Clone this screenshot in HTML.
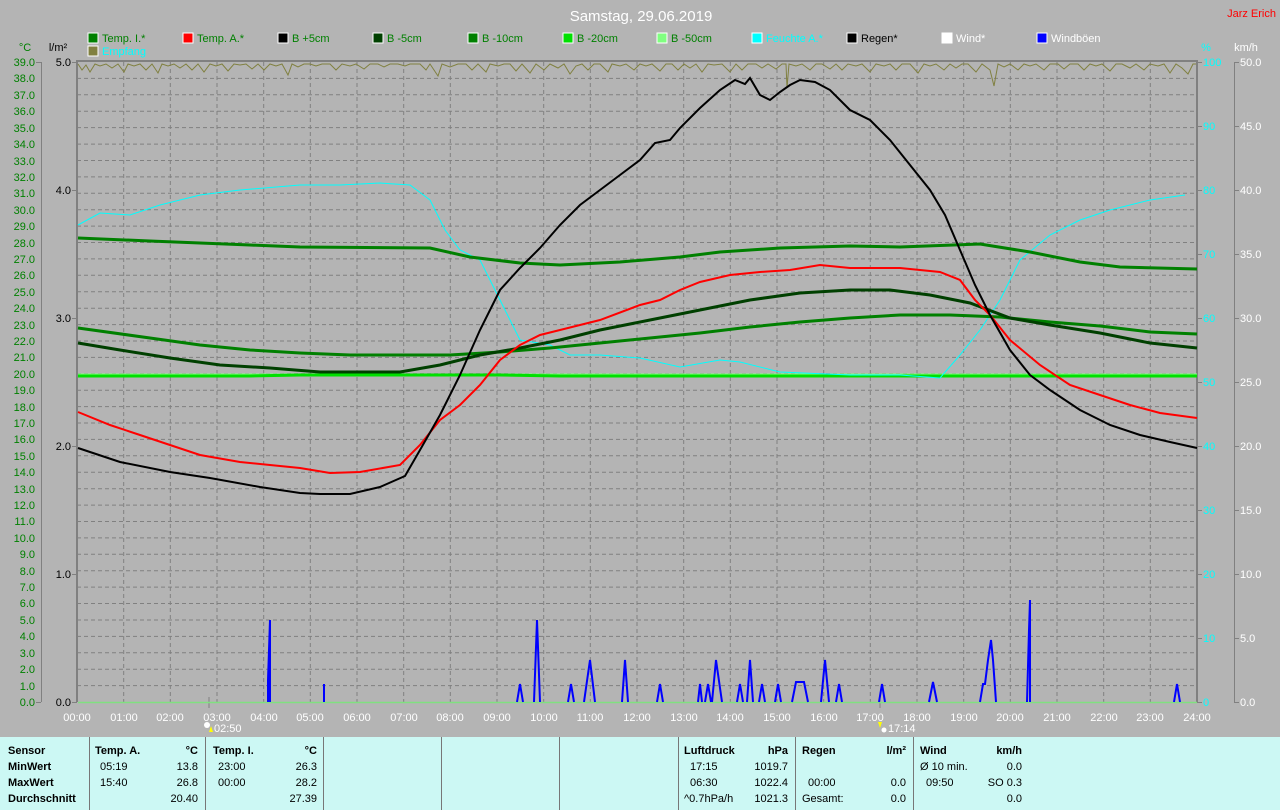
<!DOCTYPE html>
<html><head><meta charset="utf-8"><style>
html,body{margin:0;padding:0;background:#b4b4b4;width:1280px;height:810px;overflow:hidden;font-family:"Liberation Sans",sans-serif}
svg{position:absolute;left:0;top:0}
.tb{position:absolute;left:0;top:737px;width:1280px;height:73px;background:#ccf8f4;font-size:11px;color:#000}
.tb div{position:absolute;white-space:nowrap}
.b{font-weight:bold}
.vl{position:absolute;top:0;width:1px;height:73px;background:#777}
</style></head><body>
<svg width="1280" height="737" font-family="Liberation Sans, sans-serif" font-size="11">
<text x="641" y="21" fill="#fff" font-size="15" text-anchor="middle">Samstag, 29.06.2019</text>
<text x="1276" y="17" fill="#f00" font-size="11" text-anchor="end">Jarz Erich</text>
<g font-size="11">
<rect x="88" y="33" width="10" height="10" fill="#008000" stroke="#fff"/><text x="102" y="42" fill="#008000">Temp. I.*</text>
<rect x="183" y="33" width="10" height="10" fill="#f00" stroke="#fff"/><text x="197" y="42" fill="#008000">Temp. A.*</text>
<rect x="278" y="33" width="10" height="10" fill="#000" stroke="#fff"/><text x="292" y="42" fill="#008000">B +5cm</text>
<rect x="373" y="33" width="10" height="10" fill="#004000" stroke="#fff"/><text x="387" y="42" fill="#008000">B -5cm</text>
<rect x="468" y="33" width="10" height="10" fill="#008000" stroke="#fff"/><text x="482" y="42" fill="#008000">B -10cm</text>
<rect x="563" y="33" width="10" height="10" fill="#00e000" stroke="#fff"/><text x="577" y="42" fill="#008000">B -20cm</text>
<rect x="657" y="33" width="10" height="10" fill="#80ff80" stroke="#fff"/><text x="671" y="42" fill="#008000">B -50cm</text>
<rect x="752" y="33" width="10" height="10" fill="#0ff" stroke="#fff"/><text x="766" y="42" fill="#0ff">Feuchte A.*</text>
<rect x="847" y="33" width="10" height="10" fill="#000" stroke="#fff"/><text x="861" y="42" fill="#000">Regen*</text>
<rect x="942" y="33" width="10" height="10" fill="#fff" stroke="#fff"/><text x="956" y="42" fill="#fff">Wind*</text>
<rect x="1037" y="33" width="10" height="10" fill="#00f" stroke="#fff"/><text x="1051" y="42" fill="#fff">Windböen</text>
<rect x="88" y="46" width="10" height="10" fill="#808040" stroke="#fff"/><text x="102" y="55" fill="#0ff">Empfang</text>
</g>
<text x="25" y="51" fill="#008000" text-anchor="middle">°C</text>
<text x="58" y="51" fill="#000" text-anchor="middle">l/m²</text>
<text x="1206" y="51" fill="#0ff" text-anchor="middle">%</text>
<text x="1246" y="51" fill="#fff" text-anchor="middle">km/h</text>
<!-- grid -->
<path stroke="#808080" stroke-dasharray="4,3" fill="none" d="M77 685.6H1197M77 669.2H1197M77 652.8H1197M77 636.4H1197M77 620H1197M77 603.5H1197M77 587.1H1197M77 570.7H1197M77 554.3H1197M77 537.9H1197M77 521.5H1197M77 505.1H1197M77 488.7H1197M77 472.3H1197M77 455.8H1197M77 439.4H1197M77 423H1197M77 406.6H1197M77 390.2H1197M77 373.8H1197M77 357.4H1197M77 341H1197M77 324.6H1197M77 308.2H1197M77 291.8H1197M77 275.3H1197M77 258.9H1197M77 242.5H1197M77 226.1H1197M77 209.7H1197M77 193.3H1197M77 176.9H1197M77 160.5H1197M77 144.1H1197M77 127.6H1197M77 111.2H1197M77 94.8H1197M77 78.4H1197
M123.7 62V702M170.3 62V702M217 62V702M263.7 62V702M310.3 62V702M357 62V702M403.7 62V702M450.3 62V702M497 62V702M543.7 62V702M590.3 62V702M637 62V702M683.7 62V702M730.3 62V702M777 62V702M823.7 62V702M870.3 62V702M917 62V702M963.7 62V702M1010.3 62V702M1057 62V702M1103.7 62V702M1150.3 62V702"/>
<path stroke="#808080" stroke-width="2" fill="none" d="M77 702V61H1197V702"/>
<!-- left axis -->
<path stroke="#808080" fill="none" d="M41.5 62V702M36 62.5H41M36 702.5H41M72 62.5H77M72 190.5H77M72 318.5H77M72 446.5H77M72 574.5H77M72 702.5H77M1197 62.5H1202M1197 126.5H1202M1197 190.5H1202M1197 254.5H1202M1197 318.5H1202M1197 382.5H1202M1197 446.5H1202M1197 510.5H1202M1197 574.5H1202M1197 638.5H1202M1197 702.5H1202M1234.5 62V702M1234 62.5H1239M1234 126.5H1239M1234 190.5H1239M1234 254.5H1239M1234 318.5H1239M1234 382.5H1239M1234 446.5H1239M1234 510.5H1239M1234 574.5H1239M1234 638.5H1239M1234 702.5H1239M209 697V708M880 697V708"/>
<g fill="#008000" text-anchor="end">
<text x="35" y="706">0.0</text><text x="35" y="690">1.0</text><text x="35" y="673">2.0</text><text x="35" y="657">3.0</text><text x="35" y="640">4.0</text><text x="35" y="624">5.0</text><text x="35" y="607">6.0</text><text x="35" y="591">7.0</text><text x="35" y="575">8.0</text><text x="35" y="558">9.0</text><text x="35" y="542">10.0</text><text x="35" y="525">11.0</text><text x="35" y="509">12.0</text><text x="35" y="493">13.0</text><text x="35" y="476">14.0</text><text x="35" y="460">15.0</text><text x="35" y="443">16.0</text><text x="35" y="427">17.0</text><text x="35" y="411">18.0</text><text x="35" y="394">19.0</text><text x="35" y="378">20.0</text><text x="35" y="361">21.0</text><text x="35" y="345">22.0</text><text x="35" y="329">23.0</text><text x="35" y="312">24.0</text><text x="35" y="296">25.0</text><text x="35" y="279">26.0</text><text x="35" y="263">27.0</text><text x="35" y="247">28.0</text><text x="35" y="230">29.0</text><text x="35" y="214">30.0</text><text x="35" y="197">31.0</text><text x="35" y="181">32.0</text><text x="35" y="165">33.0</text><text x="35" y="148">34.0</text><text x="35" y="132">35.0</text><text x="35" y="115">36.0</text><text x="35" y="99">37.0</text><text x="35" y="82">38.0</text><text x="35" y="66">39.0</text>
</g>
<g fill="#000" text-anchor="end">
<text x="71" y="66">5.0</text><text x="71" y="194">4.0</text><text x="71" y="322">3.0</text><text x="71" y="450">2.0</text><text x="71" y="578">1.0</text><text x="71" y="706">0.0</text>
</g>
<g fill="#0ff">
<text x="1203" y="66">100</text><text x="1203" y="130">90</text><text x="1203" y="194">80</text><text x="1203" y="258">70</text><text x="1203" y="322">60</text><text x="1203" y="386">50</text><text x="1203" y="450">40</text><text x="1203" y="514">30</text><text x="1203" y="578">20</text><text x="1203" y="642">10</text><text x="1203" y="706">0</text>
</g>
<g fill="#fff">
<text x="1240" y="66">50.0</text><text x="1240" y="130">45.0</text><text x="1240" y="194">40.0</text><text x="1240" y="258">35.0</text><text x="1240" y="322">30.0</text><text x="1240" y="386">25.0</text><text x="1240" y="450">20.0</text><text x="1240" y="514">15.0</text><text x="1240" y="578">10.0</text><text x="1240" y="642">5.0</text><text x="1240" y="706">0.0</text>
</g>
<g fill="#fff" text-anchor="middle">
<text x="77" y="721">00:00</text><text x="124" y="721">01:00</text><text x="170" y="721">02:00</text><text x="217" y="721">03:00</text><text x="264" y="721">04:00</text><text x="310" y="721">05:00</text><text x="357" y="721">06:00</text><text x="404" y="721">07:00</text><text x="450" y="721">08:00</text><text x="497" y="721">09:00</text><text x="544" y="721">10:00</text><text x="590" y="721">11:00</text><text x="637" y="721">12:00</text><text x="684" y="721">13:00</text><text x="730" y="721">14:00</text><text x="777" y="721">15:00</text><text x="824" y="721">16:00</text><text x="870" y="721">17:00</text><text x="917" y="721">18:00</text><text x="964" y="721">19:00</text><text x="1010" y="721">20:00</text><text x="1057" y="721">21:00</text><text x="1104" y="721">22:00</text><text x="1150" y="721">23:00</text><text x="1197" y="721">24:00</text>
</g>
<circle cx="207" cy="725" r="3" fill="#fff"/><path d="M209 732l2-6 2 6z" fill="#ff0"/><text x="214" y="732" fill="#fff">02:50</text>
<path d="M878 722l2 6 2-6z" fill="#ff0"/><circle cx="884" cy="730" r="2.5" fill="#fff"/><text x="888" y="732" fill="#fff">17:14</text>
<!-- baseline -->
<path d="M78 702.5H1197" stroke="#80e080" stroke-width="1.5"/>
<!-- empfang -->
<polyline fill="none" stroke="#808040" stroke-width="1" points="78,64 82,70 86,65 90,72 95,64 100,66 106,64 112,68 118,64 124,72 128,64 134,66 140,64 146,70 152,64 158,73 162,64 168,66 174,64 180,68 186,64 192,70 198,64 204,72 210,64 216,66 222,64 228,71 234,64 240,65 246,64 252,69 258,64 264,70 270,64 276,66 282,64 288,75 292,64 298,67 304,64 310,64 316,66 322,64 330,64 336,70 342,64 350,66 356,64 364,69 370,64 378,64 384,67 390,64 398,64 405,66 410,64 420,64 426,70 430,64 438,76 442,64 450,67 458,64 466,64 472,70 478,64 486,72 490,64 498,66 504,64 510,64 516,71 522,64 530,73 536,64 544,70 550,64 558,68 564,64 570,74 576,66 582,64 588,70 594,64 600,64 608,72 612,64 620,66 626,64 634,70 640,64 646,66 652,64 660,71 666,64 672,64 678,70 684,64 690,68 696,64 702,72 708,64 714,65 722,64 730,72 736,64 742,70 748,64 756,64 762,68 768,64 776,69 782,64 786,64 787,88 789,64 796,66 802,64 810,70 816,64 822,64 830,69 836,64 842,70 848,64 856,66 862,64 870,72 876,64 884,66 890,64 896,70 902,64 910,64 918,73 924,64 930,66 936,64 944,70 950,64 956,68 962,64 968,64 976,72 982,64 990,70 994,86 998,64 1004,67 1010,64 1018,70 1024,64 1030,66 1036,64 1044,70 1050,64 1058,64 1064,69 1070,64 1078,64 1084,70 1090,64 1096,66 1102,64 1110,71 1116,64 1122,64 1130,68 1136,64 1144,70 1150,64 1158,66 1164,64 1170,73 1176,64 1182,68 1188,74 1193,64 1196,64"/>
<!-- B-50 / B-20 -->
<path d="M78 374.5H1197" stroke="#80ff80" stroke-width="2"/>
<polyline fill="none" stroke="#00e000" stroke-width="3" points="78,376 250,376 300,375 500,375 560,376 1197,376"/>
<!-- cyan -->
<polyline fill="none" stroke="#0ff" stroke-width="1" points="78,225 100,213 130,215 160,205 200,195 240,190 300,185 340,185 380,183 410,185 430,200 445,230 460,250 480,260 500,300 520,340 550,345 570,355 600,355 640,358 680,367 720,360 740,362 780,372 850,375 900,375 940,378 960,355 980,330 1000,300 1020,260 1050,235 1080,220 1110,210 1150,200 1185,195"/>
<!-- Temp I -->
<polyline fill="none" stroke="#008000" stroke-width="3" points="78,238 150,241 250,245 300,247 430,248 470,257 520,263 560,265 620,262 680,257 720,252 780,248 850,246 900,247 980,244 1030,252 1080,262 1120,267 1197,269"/>
<!-- B-10 -->
<polyline fill="none" stroke="#008000" stroke-width="3" points="78,328 150,338 200,345 250,350 300,353 350,355 450,355 500,352 550,348 600,343 650,338 700,333 750,327 800,322 850,318 900,315 950,315 1000,317 1050,322 1100,326 1150,332 1197,334"/>
<!-- B-5 -->
<polyline fill="none" stroke="#004000" stroke-width="3" points="78,343 120,350 170,358 220,365 270,368 320,372 400,372 440,365 480,355 520,348 560,340 600,330 650,320 700,310 750,300 800,293 850,290 890,290 930,295 970,303 1010,318 1050,325 1100,333 1150,343 1197,348"/>
<!-- Temp A -->
<polyline fill="none" stroke="#f00" stroke-width="2" points="78,412 110,425 140,435 170,445 200,455 240,462 270,465 300,468 330,473 360,472 400,465 420,445 440,420 460,405 480,385 500,360 520,345 540,335 560,330 580,325 600,320 640,305 660,300 680,290 700,282 730,275 760,272 790,270 820,265 850,268 900,268 940,272 960,280 975,300 990,315 1010,340 1040,365 1070,385 1100,395 1130,405 1160,413 1197,418"/>
<!-- B+5 -->
<polyline fill="none" stroke="#000" stroke-width="2" points="78,448 120,462 170,472 210,478 260,487 300,493 320,494 350,494 380,487 405,476 420,450 440,415 460,375 480,330 500,290 520,268 540,248 560,225 580,205 600,190 620,175 640,160 655,143 670,140 680,128 700,108 720,90 735,80 745,84 750,78 760,95 770,100 780,92 790,85 800,80 815,82 830,90 850,110 870,120 890,140 910,165 930,190 945,215 960,250 975,285 990,315 1010,350 1030,375 1050,390 1080,410 1110,425 1140,435 1170,442 1197,448"/>
<!-- wind gusts -->
<g fill="none" stroke="#00f" stroke-width="2">
<path d="M268 702V680L270 620V702M324 702V684M517 702L520 684L523 702M534 702L537 620L540 702M568 702L571 684L574 702M584 702L590 660L595 702M622 702L625 660L628 702M657 702L660 684L663 702M698 702L700 684L702 702M705 702L708 684L711 702M712 702L716 660L722 702M737 702L740 684L743 702M747 702L750 660L753 702M759 702L762 684L765 702M775 702L778 684L781 702M792 702L796 682L804 682L808 702M821 702L825 660L829 702M836 702L839 684L842 702M879 702L882 684L885 702M929 702L933 682L937 702M980 702L983 684L985 684L988 660L991 640L993 660L996 702M1027 702L1029 630L1030 600V702M1174 702L1177 684L1180 702"/>
</g>
</svg>
<div class="tb">
<div class="vl" style="left:89px"></div><div class="vl" style="left:205px"></div><div class="vl" style="left:323px"></div><div class="vl" style="left:441px"></div><div class="vl" style="left:559px"></div><div class="vl" style="left:678px"></div><div class="vl" style="left:795px"></div><div class="vl" style="left:913px"></div>
<div class="b" style="left:8px;top:8px">Sensor</div><div class="b" style="left:8px;top:24px">MinWert</div><div class="b" style="left:8px;top:40px">MaxWert</div><div class="b" style="left:8px;top:56px">Durchschnitt</div>
<div class="b" style="left:95px;top:8px">Temp. A.</div><div class="b" style="right:1082px;top:8px">°C</div>
<div style="left:100px;top:24px">05:19</div><div style="right:1082px;top:24px">13.8</div>
<div style="left:100px;top:40px">15:40</div><div style="right:1082px;top:40px">26.8</div>
<div style="right:1082px;top:56px">20.40</div>
<div class="b" style="left:213px;top:8px">Temp. I.</div><div class="b" style="right:963px;top:8px">°C</div>
<div style="left:218px;top:24px">23:00</div><div style="right:963px;top:24px">26.3</div>
<div style="left:218px;top:40px">00:00</div><div style="right:963px;top:40px">28.2</div>
<div style="right:963px;top:56px">27.39</div>
<div class="b" style="left:684px;top:8px">Luftdruck</div><div class="b" style="right:492px;top:8px">hPa</div>
<div style="left:690px;top:24px">17:15</div><div style="right:492px;top:24px">1019.7</div>
<div style="left:690px;top:40px">06:30</div><div style="right:492px;top:40px">1022.4</div>
<div style="left:684px;top:56px">^0.7hPa/h</div><div style="right:492px;top:56px">1021.3</div>
<div class="b" style="left:802px;top:8px">Regen</div><div class="b" style="right:374px;top:8px">l/m²</div>
<div style="left:808px;top:40px">00:00</div><div style="right:374px;top:40px">0.0</div>
<div style="left:802px;top:56px">Gesamt:</div><div style="right:374px;top:56px">0.0</div>
<div class="b" style="left:920px;top:8px">Wind</div><div class="b" style="right:258px;top:8px">km/h</div>
<div style="left:920px;top:24px">Ø 10 min.</div><div style="right:258px;top:24px">0.0</div>
<div style="left:926px;top:40px">09:50</div><div style="right:258px;top:40px">SO 0.3</div>
<div style="right:258px;top:56px">0.0</div>
</div>
</body></html>
